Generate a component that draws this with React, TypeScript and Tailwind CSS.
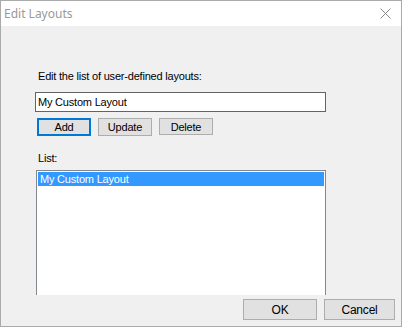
export default function App() {
  return (
    <div className="w-[402px] h-[327px] flex flex-col border border-[#aaaaaa] bg-[#f0f0f0] text-[11px] tracking-[-0.2px] text-black overflow-hidden" style={{ fontFamily: '"Liberation Sans", Arial, sans-serif' }}>
      {/* Title bar */}
      <div className="h-[25px] shrink-0 bg-white flex items-center justify-between pl-[3px] pr-[10px]">
        <span className="text-[12px] tracking-normal text-[#999999]" style={{ fontFamily: '"Noto Sans", "Open Sans", sans-serif' }}>Edit Layouts</span>
        <svg width="11" height="11" viewBox="0 0 11 11" className="text-[#8a8a8a]">
          <path d="M0.5 0.5L10.5 10.5M10.5 0.5L0.5 10.5" stroke="currentColor" strokeWidth="1" />
        </svg>
      </div>

      {/* Body */}
      <div className="flex-1 min-h-0 overflow-hidden pl-[34px] flex flex-col">
        <div className="mt-[43px] ml-[3px] h-[14px] leading-[14px]">Edit the list of user-defined layouts:</div>
        <div className="mt-[9px] w-[291px] h-[20px] shrink-0 border border-[#646464] bg-white flex items-center pl-[2px] leading-[14px]">
          My Custom Layout
        </div>
        <div className="mt-[6px] ml-[2px] flex gap-[7px] shrink-0">
          <button className="w-[54px] h-[18px] border-2 border-[#0078d7] bg-[#e1e1e1] leading-[14px]">Add</button>
          <button className="w-[54px] h-[18px] border border-[#adadad] bg-[#e1e1e1] leading-[14px]">Update</button>
          <button className="w-[54px] h-[17px] border border-[#adadad] bg-[#e1e1e1] leading-[14px]">Delete</button>
        </div>
        <div className="mt-[15px] ml-[3px] h-[14px] leading-[14px] shrink-0">List:</div>
        <div className="mt-[5px] ml-[1px] w-[290px] h-[160px] shrink-0 border border-[#828790] bg-white p-[1px]">
          <div className="h-[14px] bg-[#3399ff] text-white pl-[2px] leading-[14px]">My Custom Layout</div>
        </div>
      </div>

      {/* Footer */}
      <div className="h-[31px] shrink-0 flex justify-end items-start gap-[7px] pt-[4px] pr-[6px]">
        <button className="w-[74px] h-[21px] border border-[#adadad] bg-[#e1e1e1] text-[12px]">OK</button>
        <button className="w-[71px] h-[21px] border border-[#adadad] bg-[#e1e1e1] text-[12px]">Cancel</button>
      </div>
    </div>
  );
}
